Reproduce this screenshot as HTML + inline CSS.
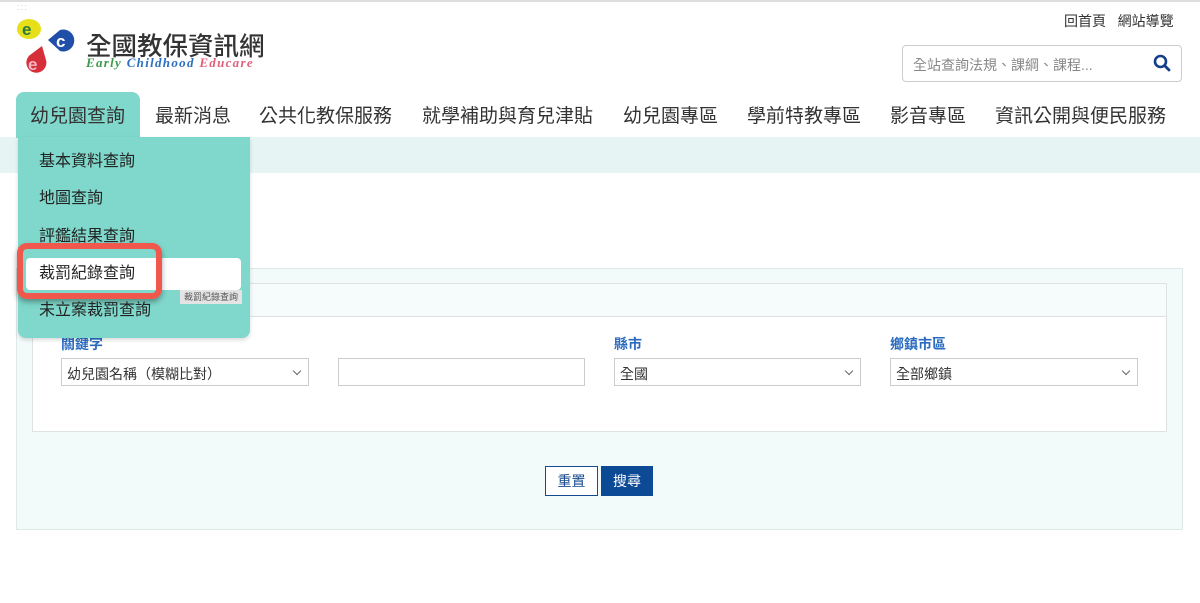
<!DOCTYPE html><html><head><meta charset="utf-8"><style>
*{box-sizing:border-box;margin:0;padding:0}
body{width:1200px;height:603px;background:#fff;font-family:"Liberation Sans","Noto Sans CJK TC",sans-serif;position:relative;overflow:hidden;color:#333}
.a{position:absolute}
.chev{position:absolute;right:8px;top:9px;width:6px;height:6px;border-right:1px solid #666;border-bottom:1px solid #666;transform:rotate(45deg)}
</style></head><body>
<div class="a" style="left:0;top:0;width:1200px;height:2px;background:#ddd"></div>
<div class="a" style="left:17px;top:4px;font-size:8px;color:#bbb;letter-spacing:1px;line-height:4px">···<br>···</div>
<svg class="a" style="left:14px;top:16px" width="64" height="58" viewBox="0 0 64 58">
<ellipse cx="15" cy="13" rx="12" ry="10" fill="#e6df1a"/>
<text x="8" y="19" font-size="17" font-weight="bold" fill="#2a7a3a" font-family="Liberation Sans">e</text>
<path d="M34 24l12-10a11 11 0 1 1 0 21z" fill="#1f4fa8"/>
<text x="42" y="31" font-size="17" font-weight="bold" fill="#fff" font-family="Liberation Sans">c</text>
<path d="M28 30l-12 9a10 10 0 1 0 16 5z" fill="#d62f3a"/>
<text x="14" y="54" font-size="17" font-weight="bold" fill="#f5b6c6" font-family="Liberation Sans">e</text>
</svg>
<div class="a" style="left:86px;top:26px;font-size:25.5px;color:#333;font-weight:500">全國教保資訊網</div>
<div class="a" style="left:86px;top:55px;font-size:13px;font-style:italic;font-weight:bold;font-family:'Liberation Serif',serif;letter-spacing:1.3px"><span style="color:#3c9a4a">Early</span> <span style="color:#2c6fc0">Childhood</span> <span style="color:#e0607a">Educare</span></div>
<div class="a" style="left:1064px;top:11px;font-size:14px;color:#333">回首頁 &nbsp; 網站導覽</div>
<div class="a" style="left:902px;top:45px;width:280px;height:37px;border:1px solid #ccc;border-radius:4px;font-size:14px;color:#888;padding:9px 10px">全站查詢法規、課綱、課程...</div>
<svg class="a" style="left:1153px;top:54px" width="18" height="18" viewBox="0 0 18 18"><circle cx="7.5" cy="7.5" r="5.5" fill="none" stroke="#123e8a" stroke-width="2.6"/><path d="M11.5 11.5l4.5 4.5" stroke="#123e8a" stroke-width="2.8" stroke-linecap="round"/></svg>
<div class="a" style="left:0;top:137px;width:1200px;height:36px;background:#e6f5f3"></div>
<div class="a" style="left:16px;top:92px;width:124px;height:46px;background:#7fd8cb;border-radius:8px 8px 0 0"></div>
<div class="a" style="left:0;top:101px;font-size:19px;color:#333;white-space:nowrap">
<span class="a" style="left:30px">幼兒園查詢</span><span class="a" style="left:155px">最新消息</span><span class="a" style="left:259px">公共化教保服務</span><span class="a" style="left:422px">就學補助與育兒津貼</span><span class="a" style="left:623px">幼兒園專區</span><span class="a" style="left:747px">學前特教專區</span><span class="a" style="left:890px">影音專區</span><span class="a" style="left:995px">資訊公開與便民服務</span></div>
<div class="a" style="left:16px;top:268px;width:1167px;height:262px;background:#f2fafa;border:1px solid #dde8e8"></div>
<div class="a" style="left:32px;top:283px;width:1135px;height:149px;background:#fff;border:1px solid #dde2e2"></div>
<div class="a" style="left:33px;top:284px;width:1133px;height:33px;background:#f6fbfb;border-bottom:1px solid #dde2e2"></div>
<div class="a" style="left:61px;top:334px;font-size:14px;font-weight:bold;color:#2a6bbf">關鍵字</div>
<div class="a" style="left:614px;top:334px;font-size:14px;font-weight:bold;color:#2a6bbf">縣市</div>
<div class="a" style="left:890px;top:334px;font-size:14px;font-weight:bold;color:#2a6bbf">鄉鎮市區</div>
<div class="a" style="left:61px;top:358px;width:248px;height:28px;border:1px solid #ccc;font-size:14px;padding:5px 5px">幼兒園名稱（模糊比對）<span class="chev"></span></div>
<div class="a" style="left:338px;top:358px;width:247px;height:28px;border:1px solid #ccc"></div>
<div class="a" style="left:614px;top:358px;width:247px;height:28px;border:1px solid #ccc;font-size:14px;padding:5px 5px">全國<span class="chev"></span></div>
<div class="a" style="left:890px;top:358px;width:248px;height:28px;border:1px solid #ccc;font-size:14px;padding:5px 5px">全部鄉鎮<span class="chev"></span></div>
<div class="a" style="left:545px;top:466px;width:53px;height:30px;border:1px solid #174a8e;background:#fff;color:#174a8e;font-size:14px;text-align:center;line-height:28px">重置</div>
<div class="a" style="left:601px;top:466px;width:52px;height:30px;background:#0c4a96;color:#fff;font-size:14px;text-align:center;line-height:30px">搜尋</div>
<div class="a" style="left:18px;top:137px;width:232px;height:201px;background:#7fd8cb;border-radius:0 0 8px 8px;box-shadow:0 2px 4px rgba(0,0,0,.15)"></div>
<div class="a" style="left:26px;top:258px;width:215px;height:32px;background:#fff;border-radius:4px"></div>
<div class="a" style="left:17px;top:243px;width:145px;height:56px;border:6px solid #f0584e;border-radius:10px;box-shadow:0 3px 6px rgba(0,0,0,.35)"></div>
<div class="a" style="left:180px;top:290px;width:62px;height:14px;background:#e4e4e4;font-size:9px;color:#555;text-align:center;line-height:14px">裁罰紀錄查詢</div>
<div class="a" style="left:39px;top:143px;font-size:16px;color:#222;line-height:37.3px">基本資料查詢<br>地圖查詢<br>評鑑結果查詢<br>裁罰紀錄查詢<br>未立案裁罰查詢</div>
</body></html>
